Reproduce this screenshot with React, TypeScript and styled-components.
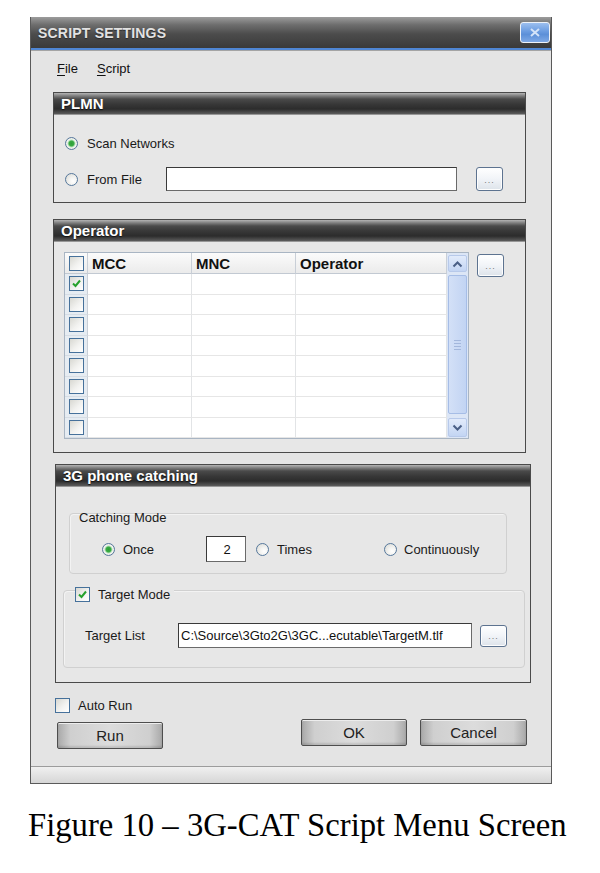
import styled, { createGlobalStyle } from "styled-components";

const GlobalStyle = createGlobalStyle`
  html, body {
    margin: 0;
    padding: 0;
    background: #fff;
  }
  body {
    font-family: "Liberation Sans", Arial, sans-serif;
  }
`;

const Page = styled.div`
  width: 600px;
  height: 873px;
  box-sizing: border-box;
  padding: 17px 0 0 30px;
`;

const Window = styled.div`
  width: 522px;
  height: 767px;
  box-sizing: border-box;
  border: 1px solid #5a5a5a;
  border-top: none;
  background: #e4e4e4;
  display: flex;
  flex-direction: column;
`;

const TitleBar = styled.div`
  height: 31px;
  display: flex;
  align-items: center;
  justify-content: space-between;
  padding: 0 1px 0 7px;
  background: linear-gradient(to bottom, #9c9c9c 0%, #6e6e6e 25%, #4c4c4c 55%, #3a3a3a 100%);
  border-bottom: 2px solid #4f86d4;
  box-shadow: 0 1px 0 #a4a4a4;
`;

const Title = styled.span`
  color: #e2e2e2;
  font-size: 14px;
  font-weight: 700;
  letter-spacing: 0.2px;
  text-shadow: 0 1px 1px #2a2a2a;
`;

const CloseBtn = styled.div`
  width: 30px;
  height: 21px;
  box-sizing: border-box;
  border: 1px solid #eef2f8;
  border-radius: 3px;
  background: linear-gradient(to bottom, #9cbfef 0%, #6a9be0 45%, #5c8fd8 60%, #7ea9e6 100%);
  display: flex;
  align-items: center;
  justify-content: center;
`;

const MenuBar = styled.div`
  display: flex;
  gap: 19px;
  padding: 10px 0 0 26px;
  margin-top: 1px;
  font-size: 13px;
  line-height: 16px;
  color: #111;
`;

const MenuItem = styled.span`
  u {
    text-decoration: underline;
    text-underline-offset: 2px;
  }
`;

const Group = styled.section<{ $mt: number; $ml: number; $mr: number }>`
  margin: ${(p) => p.$mt}px ${(p) => p.$mr}px 0 ${(p) => p.$ml}px;
  border: 1px solid #4a4a4a;
  background: #e7e7e7;
`;

const GroupHeader = styled.div`
  height: 22px;
  line-height: 22px;
  padding-left: 7px;
  color: #fff;
  font-size: 15px;
  font-weight: 700;
  text-shadow: 0 1px 1px #111;
  background: linear-gradient(
    to bottom,
    #b4b4b4 0px,
    #7c7c7c 3px,
    #4a4a4a 6px,
    #383838 11px,
    #2c2c2c 16px,
    #5c5c5c 21px,
    #d2d2d2 22px
  );
`;

const GroupBody = styled.div<{ $pad: string }>`
  padding: ${(p) => p.$pad};
  display: flex;
  flex-direction: column;
`;

const Row = styled.div<{ $mt?: number; $h?: number }>`
  display: flex;
  align-items: center;
  height: ${(p) => p.$h ?? 24}px;
  margin-top: ${(p) => p.$mt ?? 0}px;
`;

const Radio = styled.span<{ $on?: boolean; $ml?: number }>`
  flex: none;
  width: 13px;
  height: 13px;
  box-sizing: border-box;
  border-radius: 50%;
  margin-left: ${(p) => p.$ml ?? 0}px;
  border: 1px solid #56789c;
  background: ${(p) =>
    p.$on
      ? "radial-gradient(circle, #2c9f37 0, #3aab44 2.5px, #b4e0b8 3.5px, #f6f6f4 4.5px, #dadad4 6.5px)"
      : "radial-gradient(circle at 65% 65%, #ffffff 0, #f4f4f2 35%, #d6d6d0 100%)"};
`;

const Label = styled.span<{ $w?: number; $ml?: number }>`
  flex: none;
  font-size: 13px;
  color: #1a1a1a;
  margin-left: ${(p) => p.$ml ?? 9}px;
  width: ${(p) => (p.$w ? `${p.$w}px` : "auto")};
  white-space: nowrap;
`;

const Field = styled.input<{ $w: number; $h: number; $center?: boolean }>`
  flex: none;
  width: ${(p) => p.$w}px;
  height: ${(p) => p.$h}px;
  box-sizing: border-box;
  border: 1px solid #3a3a3a;
  border-right-color: #6a6a6a;
  border-bottom-color: #6a6a6a;
  background: #fff;
  padding: 0 0 0 2px;
  font: 13px "Liberation Sans", Arial, sans-serif;
  color: #111;
  text-align: ${(p) => (p.$center ? "center" : "left")};
  outline: none;
`;

const Browse = styled.div<{ $h: number; $ml: number; $mt?: number }>`
  flex: none;
  width: 27px;
  height: ${(p) => p.$h}px;
  margin-left: ${(p) => p.$ml}px;
  margin-top: ${(p) => p.$mt ?? 0}px;
  box-sizing: border-box;
  border: 1px solid #5d7390;
  border-radius: 3px;
  background: linear-gradient(to bottom, #ffffff 0%, #f1f4f8 50%, #dde3ea 100%);
  box-shadow: inset 0 0 0 1px #fdfdfd;
  display: flex;
  align-items: flex-end;
  justify-content: center;
  padding-bottom: 5px;
  font-size: 9px;
  line-height: 9px;
  letter-spacing: 1px;
  color: #7a7a7a;
`;

const Check = styled.span`
  flex: none;
  width: 15px;
  height: 15px;
  box-sizing: border-box;
  border: 1px solid #46719b;
  background: linear-gradient(135deg, #d8d8d2 0%, #f2f2f0 55%, #ffffff 100%);
  display: inline-flex;
  align-items: center;
  justify-content: center;
`;

const TableRow = styled.div`
  display: flex;
  align-items: flex-start;
  margin-left: 10px;
`;

const TableWrap = styled.div`
  display: flex;
  width: 405px;
  height: 187px;
  box-sizing: border-box;
  border: 1px solid #a9b5c3;
  background: #fff;
`;

const Grid = styled.div`
  display: grid;
  grid-template-columns: 23px 104px 104px 151px;
  grid-template-rows: 21px repeat(8, 1fr);
  height: 185px;
`;

const HeadCell = styled.div<{ $check?: boolean }>`
  box-sizing: border-box;
  border-bottom: 1px solid #c2c9d2;
  border-right: 1px solid #c9cfd7;
  background: linear-gradient(to bottom, #fbfbfb, #ebebeb);
  font-size: 15px;
  font-weight: 700;
  color: #111;
  padding-left: ${(p) => (p.$check ? 0 : 4)}px;
  display: flex;
  align-items: center;
  justify-content: ${(p) => (p.$check ? "center" : "flex-start")};
`;

const CheckCell = styled.div`
  box-sizing: border-box;
  border-bottom: 1px solid #d6dde5;
  border-right: 1px solid #c9cfd7;
  background: #e6ecf2;
  display: flex;
  align-items: center;
  justify-content: center;
`;

const DataCell = styled.div`
  box-sizing: border-box;
  border-bottom: 1px solid #e6e6e6;
  border-right: 1px solid #e2e4e6;
  background: #fff;
`;

const ScrollBar = styled.div`
  width: 21px;
  box-sizing: border-box;
  padding: 2px 1px 1px 1px;
  background: #dce6f6;
  display: flex;
  flex-direction: column;
`;

const ScrollArrow = styled.div<{ $h: number }>`
  height: ${(p) => p.$h}px;
  box-sizing: border-box;
  border: 1px solid #b7c9ea;
  border-radius: 2px;
  background: linear-gradient(to bottom, #e2ebfb, #c3d5f3);
  display: flex;
  align-items: center;
  justify-content: center;
`;

const Thumb = styled.div`
  flex: 1;
  margin: 3px 0 4px;
  box-sizing: border-box;
  border: 1px solid #a6bde6;
  border-radius: 2px;
  background: linear-gradient(to right, #d3e0f7, #c2d4f3);
  display: flex;
  flex-direction: column;
  align-items: center;
  justify-content: center;
  gap: 2px;
`;

const Grip = styled.span`
  width: 7px;
  height: 1px;
  background: #a3b7dc;
`;

const InnerBox = styled.div<{ $mt: number; $ml: number; $mr: number; $pad: string }>`
  margin: ${(p) => p.$mt}px ${(p) => p.$mr}px 0 ${(p) => p.$ml}px;
  padding: ${(p) => p.$pad};
  border: 1px solid #d0d0d0;
  border-radius: 4px;
  box-shadow: inset 1px 1px 0 #f3f3f3;
  display: flex;
  flex-direction: column;
`;

const BoxTitle = styled.span`
  font-size: 13px;
  line-height: 14px;
  color: #1a1a1a;
  margin-top: -3px;
`;

const Legend = styled.div`
  display: flex;
  align-items: center;
  gap: 8px;
  width: fit-content;
  height: 16px;
  margin: -5px 0 0 11px;
  padding-right: 4px;
  background: #e7e7e7;
  font-size: 13px;
  color: #1a1a1a;
`;

const AutoRow = styled.div`
  display: flex;
  align-items: center;
  gap: 8px;
  margin-top: 15px;
  padding-left: 24px;
  height: 15px;
  font-size: 13px;
  color: #1a1a1a;
`;

const ButtonRow = styled.div`
  display: flex;
  align-items: flex-start;
  margin-top: 6px;
  padding: 0 24px 0 26px;
`;

const Button = styled.div<{ $w: number; $ml?: string; $mt?: number }>`
  width: ${(p) => p.$w}px;
  height: 27px;
  margin-left: ${(p) => p.$ml ?? "0"};
  margin-top: ${(p) => p.$mt ?? 0}px;
  box-sizing: border-box;
  border: 1px solid #4e4e4e;
  border-radius: 2px;
  background: linear-gradient(
    to right,
    #a9a9a9 0%,
    #cfcfcf 12%,
    #dcdcdc 50%,
    #cfcfcf 88%,
    #a9a9a9 100%
  );
  box-shadow: inset 0 1px 0 #ededed, inset 0 -2px 2px rgba(0, 0, 0, 0.12);
  display: flex;
  align-items: center;
  justify-content: center;
  font-size: 15px;
  color: #222;
`;

const StatusBar = styled.div`
  margin-top: auto;
  height: 16px;
  border-top: 1px solid #9c9c9c;
  background: linear-gradient(to bottom, #f0f0f0, #d6d6d6);
`;

const Caption = styled.div`
  margin: 23px 0 0 -2px;
  font-family: "Liberation Serif", "Times New Roman", serif;
  font-size: 32.7px;
  color: #000;
  white-space: nowrap;
`;

const Tick = () => (
  <svg width="11" height="11" viewBox="0 0 11 11">
    <path d="M2 5.5 L4.5 8 L9 2.5" fill="none" stroke="#25a12c" strokeWidth="2" />
  </svg>
);

const Chevron = ({ up }: { up?: boolean }) => (
  <svg width="11" height="8" viewBox="0 0 11 8">
    <path
      d={up ? "M1.5 6.5 L5.5 2.5 L9.5 6.5" : "M1.5 1.5 L5.5 5.5 L9.5 1.5"}
      fill="none"
      stroke="#4a5f86"
      strokeWidth="2"
    />
  </svg>
);

const checked = [true, false, false, false, false, false, false, false];

const App = () => {
  return (
    <Page>
      <GlobalStyle />
      <Window>
        <TitleBar>
          <Title>SCRIPT SETTINGS</Title>
          <CloseBtn>
            <svg width="12" height="9" viewBox="0 0 12 9">
              <path d="M2 1 L10 8 M10 1 L2 8" stroke="#d4e3f8" strokeWidth="2" />
            </svg>
          </CloseBtn>
        </TitleBar>

        <MenuBar>
          <MenuItem>
            <u>F</u>ile
          </MenuItem>
          <MenuItem>
            <u>S</u>cript
          </MenuItem>
        </MenuBar>

        <Group $mt={15} $ml={22} $mr={25}>
          <GroupHeader>PLMN</GroupHeader>
          <GroupBody $pad="16px 0 11px 11px">
            <Row>
              <Radio $on />
              <Label>Scan Networks</Label>
            </Row>
            <Row $mt={12}>
              <Radio />
              <Label $w={79}>From File</Label>
              <Field $w={291} $h={24} readOnly defaultValue="" />
              <Browse $h={24} $ml={19}>...</Browse>
            </Row>
          </GroupBody>
        </Group>

        <Group $mt={16} $ml={22} $mr={25}>
          <GroupHeader>Operator</GroupHeader>
          <GroupBody $pad="10px 0 13px 0">
            <TableRow>
              <TableWrap>
                <Grid>
                  <HeadCell $check>
                    <Check />
                  </HeadCell>
                  <HeadCell>MCC</HeadCell>
                  <HeadCell>MNC</HeadCell>
                  <HeadCell>Operator</HeadCell>
                  {checked.map((on, i) => [
                    <CheckCell key={`c${i}`}>
                      <Check>{on && <Tick />}</Check>
                    </CheckCell>,
                    <DataCell key={`a${i}`} />,
                    <DataCell key={`b${i}`} />,
                    <DataCell key={`d${i}`} />,
                  ])}
                </Grid>
                <ScrollBar>
                  <ScrollArrow $h={17}>
                    <Chevron up />
                  </ScrollArrow>
                  <Thumb>
                    <Grip />
                    <Grip />
                    <Grip />
                    <Grip />
                  </Thumb>
                  <ScrollArrow $h={19}>
                    <Chevron />
                  </ScrollArrow>
                </ScrollBar>
              </TableWrap>
              <Browse $h={23} $ml={8} $mt={2}>
                ...
              </Browse>
            </TableRow>
          </GroupBody>
        </Group>

        <Group $mt={11} $ml={24} $mr={20}>
          <GroupHeader>3G phone catching</GroupHeader>
          <GroupBody $pad="26px 0 14px 0">
            <InnerBox $mt={0} $ml={13} $mr={23} $pad="0 0 11px 9px">
              <BoxTitle>Catching Mode</BoxTitle>
              <Row $mt={11} $h={26}>
                <Radio $on $ml={23} />
                <Label $ml={8} $w={83}>
                  Once
                </Label>
                <Field $w={40} $h={26} $center readOnly defaultValue="2" />
                <Radio $ml={10} />
                <Label $ml={8} $w={107}>
                  Times
                </Label>
                <Radio />
                <Label $ml={7}>Continuously</Label>
              </Row>
            </InnerBox>

            <InnerBox $mt={16} $ml={7} $mr={5} $pad="0 0 19px 0">
              <Legend>
                <Check>
                  <Tick />
                </Check>
                Target Mode
              </Legend>
              <Row $mt={21} $h={25}>
                <Label $ml={21} $w={93}>
                  Target List
                </Label>
                <Field
                  $w={294}
                  $h={25}
                  readOnly
                  defaultValue={"C:\\Source\\3Gto2G\\3GC...ecutable\\TargetM.tlf"}
                />
                <Browse $h={22} $ml={8}>
                  ...
                </Browse>
              </Row>
            </InnerBox>
          </GroupBody>
        </Group>

        <AutoRow>
          <Check />
          Auto Run
        </AutoRow>

        <ButtonRow>
          <Button $w={106} $mt={3}>
            Run
          </Button>
          <Button $w={106} $ml="auto">
            OK
          </Button>
          <Button $w={107} $ml="13px">
            Cancel
          </Button>
        </ButtonRow>

        <StatusBar />
      </Window>
      <Caption>Figure 10 – 3G-CAT Script Menu Screen</Caption>
    </Page>
  );
};

export default App;
